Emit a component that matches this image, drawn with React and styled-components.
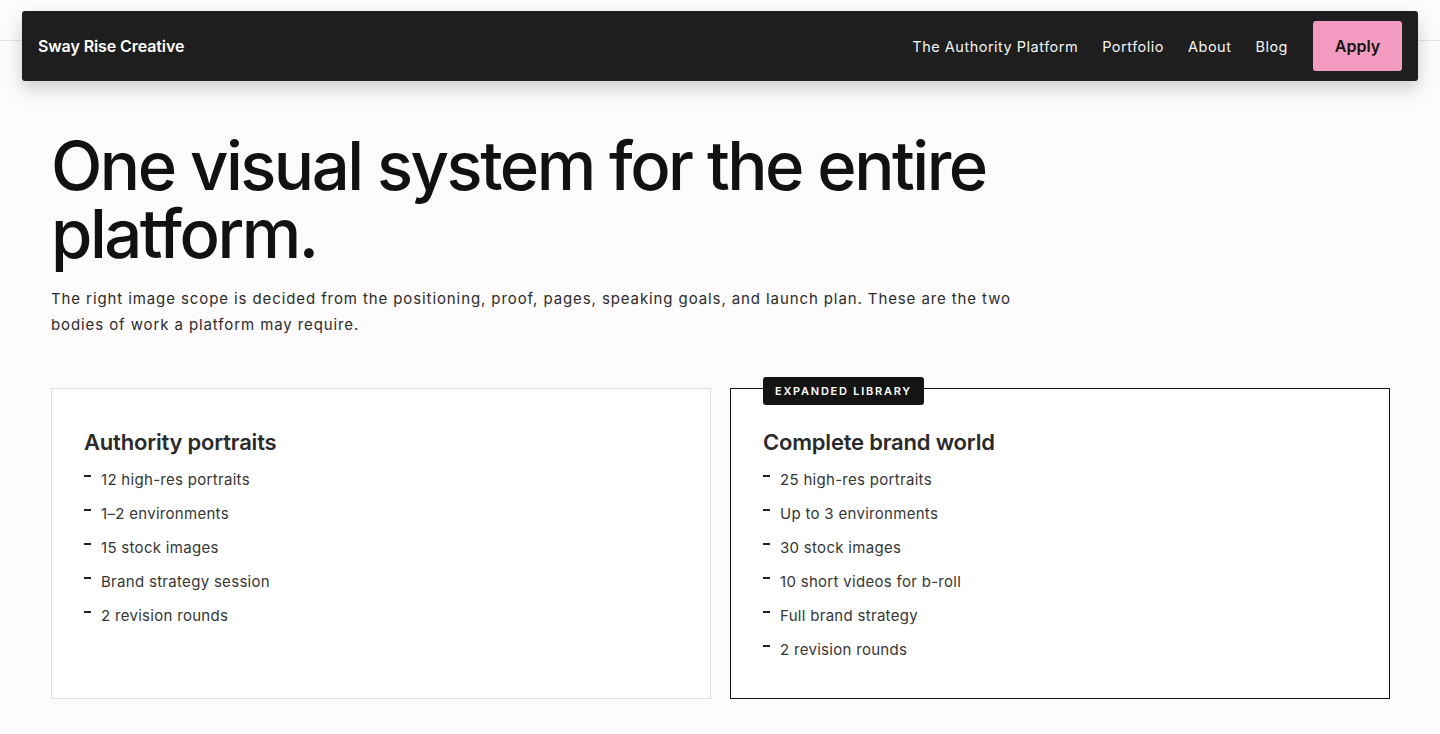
import React from 'react';
import styled, { createGlobalStyle } from 'styled-components';

const GlobalStyle = createGlobalStyle`
  * { box-sizing: border-box; }
  body {
    margin: 0;
    background: #fdfbfc;
    font-family: Inter, "Noto Sans", sans-serif;
    color: #1a1a1a;
  }
`;

const packages = [
  {
    title: 'Authority portraits',
    items: ['12 high-res portraits', '1–2 environments', '15 stock images', 'Brand strategy session', '2 revision rounds'],
  },
  {
    title: 'Complete brand world',
    badge: 'Expanded library',
    featured: true,
    items: [
      '25 high-res portraits',
      'Up to 3 environments',
      '30 stock images',
      '10 short videos for b-roll',
      'Full brand strategy',
      '2 revision rounds',
    ],
  },
];

const App = () => (
  <>
    <GlobalStyle />
    <Page>
      <HeaderWrap>
        <NavBar>
          <Brand>Sway Rise Creative</Brand>
          <NavLinks>
            <NavLink href="#">The Authority Platform</NavLink>
            <NavLink href="#">Portfolio</NavLink>
            <NavLink href="#">About</NavLink>
            <NavLink href="#">Blog</NavLink>
            <ApplyButton>Apply</ApplyButton>
          </NavLinks>
        </NavBar>
      </HeaderWrap>

      <Main>
        <Headline>One visual system for the entire platform.</Headline>
        <Lead>
          The right image scope is decided from the positioning, proof, pages, speaking goals, and launch plan. These are the two
          bodies of work a platform may require.
        </Lead>

        <CardGrid>
          {packages.map((pkg) => (
            <Card key={pkg.title} $featured={pkg.featured}>
              {pkg.badge && <Badge>{pkg.badge}</Badge>}
              <CardTitle>{pkg.title}</CardTitle>
              <ItemList>
                {pkg.items.map((item) => (
                  <Item key={item}>{item}</Item>
                ))}
              </ItemList>
            </Card>
          ))}
        </CardGrid>
      </Main>
    </Page>
  </>
);

export default App;

const Page = styled.div`
  min-height: 734px;
`;

const HeaderWrap = styled.header`
  position: relative;
  padding: 11px 22px 0;

  &::before {
    content: '';
    position: absolute;
    left: 0;
    right: 0;
    top: 40px;
    height: 1px;
    background: #e6e4e5;
  }
`;

const NavBar = styled.nav`
  position: relative;
  height: 70px;
  display: flex;
  align-items: center;
  justify-content: space-between;
  padding: 0 16px;
  background: #1e1e1e;
  border-radius: 3px;
  box-shadow: 0 8px 18px rgba(0, 0, 0, 0.18);
`;

const Brand = styled.div`
  color: #fff;
  font-size: 16px;
  font-weight: 600;
  letter-spacing: -0.1px;
`;

const NavLinks = styled.div`
  display: flex;
  align-items: center;
  gap: 24px;
`;

const NavLink = styled.a`
  color: #f4f4f4;
  text-decoration: none;
  font-size: 14.5px;
  font-weight: 400;
  letter-spacing: 0.5px;
`;

const ApplyButton = styled.button`
  margin-left: 1px;
  width: 89px;
  height: 50px;
  border: none;
  border-radius: 3px;
  background: #f39bc0;
  color: #151515;
  font-family: inherit;
  font-size: 16px;
  font-weight: 600;
`;

const Main = styled.main`
  padding: 51px 51px 0;
`;

const Headline = styled.h1`
  margin: 0;
  max-width: 1000px;
  font-size: 67px;
  line-height: 68px;
  font-weight: 500;
  letter-spacing: -2.5px;
  color: #111;
`;

const Lead = styled.p`
  margin: 18px 0 0;
  max-width: 962px;
  font-size: 15px;
  line-height: 26px;
  letter-spacing: 0.9px;
  color: #2c2c2c;
`;

const CardGrid = styled.div`
  margin-top: 50px;
  display: grid;
  grid-template-columns: 660px 660px;
  gap: 19px;
`;

const Card = styled.section`
  position: relative;
  height: 311px;
  padding: 39px 32px 0;
  background: #fff;
  border: 1px solid ${(p) => (p.$featured ? '#111' : '#dedede')};
`;

const Badge = styled.span`
  position: absolute;
  top: -12px;
  left: 32px;
  height: 28px;
  padding: 0 12px;
  display: flex;
  align-items: center;
  background: #141414;
  border-radius: 3px;
  color: #fff;
  font-size: 11px;
  font-weight: 600;
  letter-spacing: 1.75px;
  text-transform: uppercase;
`;

const CardTitle = styled.h2`
  margin: 0;
  font-size: 22px;
  line-height: 28px;
  font-weight: 600;
  letter-spacing: -0.2px;
  color: #2a2a2a;
`;

const ItemList = styled.ul`
  margin: 6px 0 0;
  padding: 0;
  list-style: none;
`;

const Item = styled.li`
  display: flex;
  align-items: center;
  gap: 10px;
  height: 34px;
  font-size: 15px;
  letter-spacing: 0.3px;
  color: #363636;

  &::before {
    content: '';
    width: 7px;
    height: 1.5px;
    margin-top: -6px;
    background: #222;
  }
`;
